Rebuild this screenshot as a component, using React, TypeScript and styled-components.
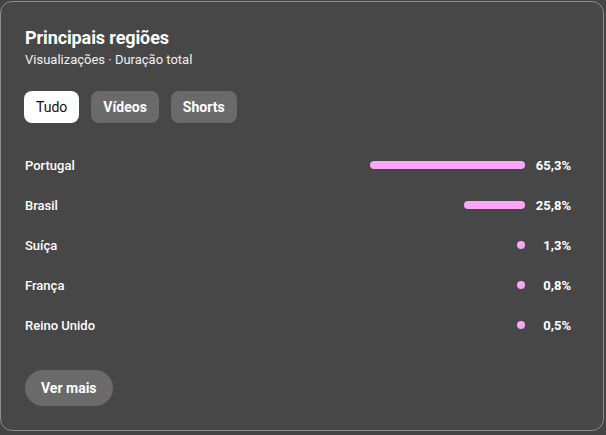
import styled, { createGlobalStyle } from 'styled-components'

const GlobalStyle = createGlobalStyle`
  html, body {
    margin: 0;
    padding: 0;
    background: #444444;
  }
  body {
    padding-top: 1px;
    font-family: Roboto, 'Liberation Sans', Arial, sans-serif;
  }
`

type Region = {
  name: string
  pct: number
  label: string
}

const regions: Region[] = [
  { name: 'Portugal', pct: 65.3, label: '65,3%' },
  { name: 'Brasil', pct: 25.8, label: '25,8%' },
  { name: 'Suíça', pct: 1.3, label: '1,3%' },
  { name: 'França', pct: 0.8, label: '0,8%' },
  { name: 'Reino Unido', pct: 0.5, label: '0,5%' },
]

const tabs = ['Tudo', 'Vídeos', 'Shorts']

// px per percent, so the top bar is 155px wide
const SCALE = 155 / 65.3

export default function App() {
  return (
    <>
      <GlobalStyle />
      <Card>
        <Title>Principais regiões</Title>
        <Subtitle>Visualizações · Duração total</Subtitle>
        <Tabs>
          {tabs.map((t, i) => (
            <Tab key={t} $active={i === 0}>
              {t}
            </Tab>
          ))}
        </Tabs>
        <List>
          {regions.map((r) => (
            <Row key={r.name}>
              <Name>{r.name}</Name>
              <BarTrack>
                <Bar style={{ width: Math.max(8, Math.round(r.pct * SCALE)) }} />
              </BarTrack>
              <Pct>{r.label}</Pct>
            </Row>
          ))}
        </List>
        <MoreButton>Ver mais</MoreButton>
      </Card>
    </>
  )
}

const Card = styled.section`
  box-sizing: border-box;
  width: 604px;
  height: 430px;
  background: #474747;
  border: 1px solid #8c8c8c;
  border-radius: 12px;
  padding: 24px 32px 0 24px;
  color: #ffffff;
`

const Title = styled.h2`
  margin: 0;
  font-size: 18px;
  font-weight: 700;
  line-height: 24px;
  letter-spacing: -0.1px;
`

const Subtitle = styled.div`
  margin-top: 2px;
  font-size: 13px;
  line-height: 16px;
  color: #f1f1f1;
`

const Tabs = styled.div`
  display: flex;
  gap: 12px;
  margin: 23px 0 0 -1px;
`

const Tab = styled.button<{ $active?: boolean }>`
  box-sizing: border-box;
  height: 32px;
  padding: 0 12px;
  border: none;
  border-radius: 8px;
  font-family: inherit;
  font-size: 14px;
  font-weight: ${(p) => (p.$active ? 400 : 700)};
  background: ${(p) => (p.$active ? '#ffffff' : '#6a6a6a')};
  color: ${(p) => (p.$active ? '#0f0f0f' : '#ffffff')};
  cursor: pointer;
`

const List = styled.div`
  display: flex;
  flex-direction: column;
  margin-top: 22px;
`

const Row = styled.div`
  display: flex;
  align-items: center;
  height: 40px;
`

const Name = styled.span`
  flex: 1;
  font-size: 13px;
  font-weight: 500;
`

const BarTrack = styled.div`
  display: flex;
  justify-content: flex-end;
  width: 160px;
`

const Bar = styled.div`
  height: 8px;
  border-radius: 4px;
  background: #f8a6f5;
`

const Pct = styled.span`
  width: 46px;
  text-align: right;
  font-size: 13px;
  font-weight: 700;
`

const MoreButton = styled.button`
  margin-top: 25px;
  height: 36px;
  padding: 0 16px;
  border: none;
  border-radius: 18px;
  background: #6a6a6a;
  color: #ffffff;
  font-family: inherit;
  font-size: 14px;
  font-weight: 700;
  cursor: pointer;
`
